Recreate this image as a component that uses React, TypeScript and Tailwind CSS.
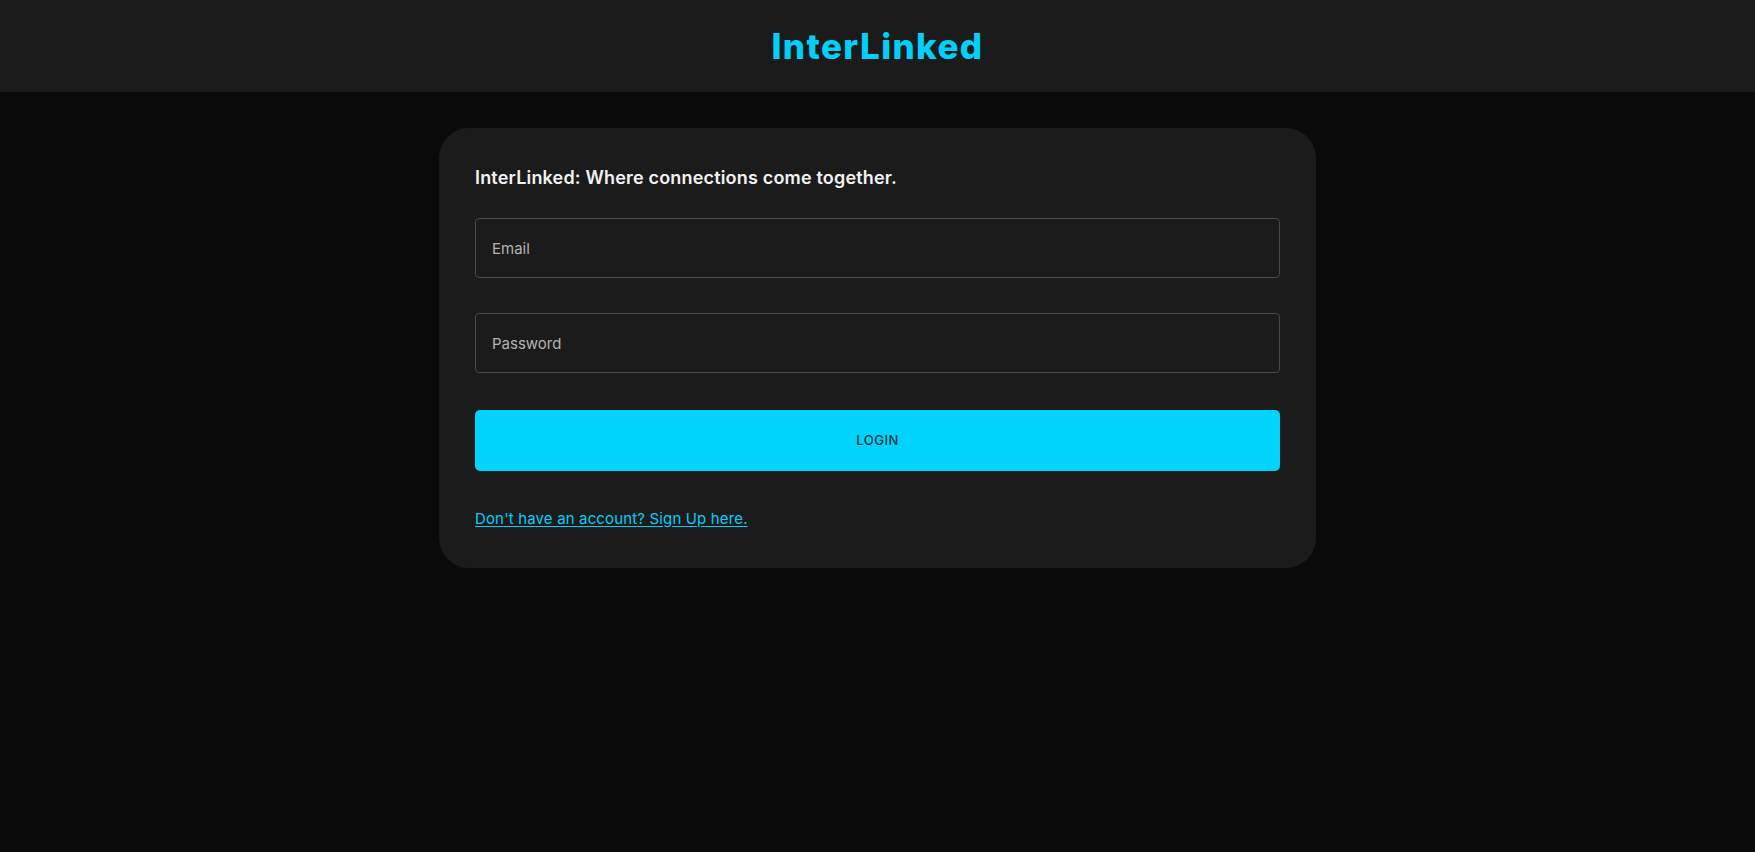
export default function App() {
  return (
    <div className="min-h-screen bg-[#0a0a0a] font-['Inter',sans-serif]">
      <header className="h-[92px] bg-[#1b1b1b] flex items-center justify-center">
        <h1 className="text-[35px] font-extrabold text-[#00cff7] tracking-[0.04em]">InterLinked</h1>
      </header>

      <main className="pt-[36px]">
        <div className="mx-auto w-[877px] rounded-[30px] bg-[#1b1b1b] px-9 pt-[37px] pb-[37px]">
          <p className="text-[18px] leading-[26px] font-semibold tracking-[0.01em] text-[#f2f2f2]">
            InterLinked: Where connections come together.
          </p>

          <form className="mt-[27px] flex flex-col" onSubmit={(e) => e.preventDefault()}>
            <input
              type="email"
              placeholder="Email"
              className="h-[60px] w-full rounded-[4px] border border-[#4a4a4a] bg-[#1b1b1b] px-4 text-[15px] text-white placeholder:text-[#b3b3b3] outline-none"
            />
            <input
              type="password"
              placeholder="Password"
              className="mt-[35px] h-[60px] w-full rounded-[4px] border border-[#4a4a4a] bg-[#1b1b1b] px-4 text-[15px] text-white placeholder:text-[#b3b3b3] outline-none"
            />
            <button
              type="submit"
              className="mt-[37px] h-[61px] w-full rounded-[5px] bg-[#00d4fd] text-[13px] font-medium tracking-[0.04em] text-[#10333b]"
            >
              LOGIN
            </button>
          </form>

          <a href="#" className="mt-[37px] inline-block text-[15px] tracking-[0.01em] text-[#00cff7] underline underline-offset-2">
            Don't have an account? Sign Up here.
          </a>
        </div>
      </main>
    </div>
  );
}
